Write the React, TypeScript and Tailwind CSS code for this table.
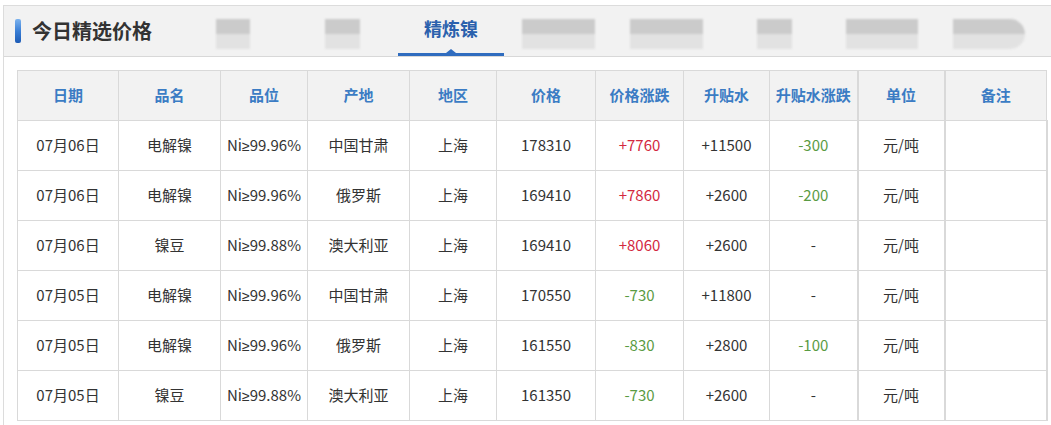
const rows = [
  { date: "07月06日", name: "电解镍", grade: "99.96%", origin: "中国甘肃", area: "上海", price: "178310", chg: "+7760", prem: "+11500", premChg: "-300" },
  { date: "07月06日", name: "电解镍", grade: "99.96%", origin: "俄罗斯", area: "上海", price: "169410", chg: "+7860", prem: "+2600", premChg: "-200" },
  { date: "07月06日", name: "镍豆", grade: "99.88%", origin: "澳大利亚", area: "上海", price: "169410", chg: "+8060", prem: "+2600", premChg: "-" },
  { date: "07月05日", name: "电解镍", grade: "99.96%", origin: "中国甘肃", area: "上海", price: "170550", chg: "-730", prem: "+11800", premChg: "-" },
  { date: "07月05日", name: "电解镍", grade: "99.96%", origin: "俄罗斯", area: "上海", price: "161550", chg: "-830", prem: "+2800", premChg: "-100" },
  { date: "07月05日", name: "镍豆", grade: "99.88%", origin: "澳大利亚", area: "上海", price: "161350", chg: "-730", prem: "+2600", premChg: "-" },
];

const headers = ["日期", "品名", "品位", "产地", "地区", "价格", "价格涨跌", "升贴水", "升贴水涨跌", "单位", "备注"];
const widths = ["w-[101px]", "w-[102px]", "w-[87px]", "w-[102px]", "w-[87px]", "w-[99px]", "w-[88px]", "w-[86px]", "w-[88px]", "w-[87px]", "w-[102px]"];

function changeColor(v: string) {
  if (v.startsWith("+")) return "text-[#d3283f]";
  if (v.startsWith("-") && v.length > 1) return "text-[#5a9b43]";
  return "text-[#333]";
}

// blurred placeholder tabs
function Blur({ w, round }: { w: string; round?: boolean }) {
  return (
    <div className={`${w} h-[30px] mt-[5px] flex flex-col blur-[1px] ${round ? "rounded-r-full" : ""} overflow-hidden`}>
      <div className="h-1/2 bg-[#cbcbcb]" />
      <div className="h-1/2 bg-[#e2e2e2]" />
    </div>
  );
}

export default function App() {
  return (
    <div
      className="w-[1051px] h-[425px] bg-white overflow-hidden pt-[5px] pl-[3px]"
      style={{ fontFamily: '"Noto Sans CJK SC", "Noto Sans", sans-serif' }}
    >
      <div className="w-[1070px] h-[430px] border-l border-t border-[#dcdcdc]">
        {/* header bar */}
        <div className="h-[51px] bg-[#f2f2f2] border-b border-[#d8d8d8] flex items-center">
          <div className="w-[212px] flex items-center pl-[11px]">
            <div className="w-[6px] h-[24px] rounded-[2px] bg-gradient-to-b from-[#7db3ee] via-[#3a7fd6] to-[#1d5bb5]" />
            <span className="ml-[11px] text-[20px] font-bold text-[#333] leading-none">今日精选价格</span>
          </div>
          <Blur w="w-[34px]" />
          <div className="w-[75px]" />
          <Blur w="w-[35px]" />
          <div className="w-[38px]" />
          <div className="w-[106px] h-full flex flex-col items-center justify-end">
            <span className="text-[18px] font-bold text-[#2b61ad] leading-none mb-[12px]">精炼镍</span>
            <div className="w-0 h-0 border-l-[5px] border-r-[5px] border-b-[4px] border-l-transparent border-r-transparent border-b-[#2f6cbf]" />
            <div className="w-full h-[3px] bg-[#2f6cbf]" />
          </div>
          <div className="w-[18px]" />
          <Blur w="w-[73px]" />
          <div className="w-[35px]" />
          <Blur w="w-[73px]" />
          <div className="w-[54px]" />
          <Blur w="w-[35px]" />
          <div className="w-[54px]" />
          <Blur w="w-[72px]" />
          <div className="w-[35px]" />
          <Blur w="w-[72px]" round />
        </div>

        {/* table */}
        <div className="pt-[13px] pl-[13px]">
          <table className="border-collapse table-fixed w-[1029px] text-[15px]">
            <thead>
              <tr className="h-[50px] bg-[#f2f2f2]">
                {headers.map((h, i) => (
                  <th
                    key={h}
                    className={`${widths[i]} border ${i === 9 || i === 10 ? "border-l-2" : ""} border-[#d9d9d9] font-bold text-[#3b7cc4] text-center`}
                  >
                    {h}
                  </th>
                ))}
              </tr>
            </thead>
            <tbody>
              {rows.map((r, idx) => {
                const cells = [r.date, r.name, r.grade, r.origin, r.area, r.price, r.chg, r.prem, r.premChg, "元/吨", ""];
                return (
                  <tr key={idx} className="h-[50px] bg-white">
                    {cells.map((c, i) => (
                      <td
                        key={i}
                        className={`border ${i === 9 || i === 10 ? "border-l-2" : ""} ${i === 10 ? "border-r-2" : ""} border-[#d9d9d9] text-center ${
                          i === 6 || i === 8 ? changeColor(c) : "text-[#333]"
                        }`}
                      >
                        {i === 2 ? (
                          <>
                            Ni<span className="font-['Liberation_Sans'] text-[14px]">≥</span>
                            {c}
                          </>
                        ) : (
                          c
                        )}
                      </td>
                    ))}
                  </tr>
                );
              })}
            </tbody>
          </table>
        </div>
      </div>
    </div>
  );
}
